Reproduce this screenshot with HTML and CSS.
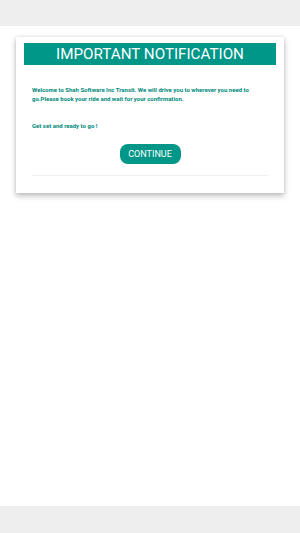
FILE: index.html
```html
<!DOCTYPE html>
<html>
<head>
<meta charset="utf-8">
<link rel="stylesheet" href="styles.css">
</head>
<body>
<div class="topbar"></div>
<main class="main">
  <div class="card">
    <div class="header">IMPORTANT NOTIFICATION</div>
    <div class="content">
      <p class="msg">Welcome to Shah Software Inc Transit. We will drive you to wherever you need to go.Please book your ride and wait for your confirmation.</p>
      <p class="msg ready">Get set and ready to go !</p>
      <div class="actions"><button class="btn">CONTINUE</button></div>
      <div class="divider"></div>
    </div>
  </div>
</main>
<div class="bottombar"></div>
</body>
</html>
```
FILE: styles.css
```css
html, body {
  margin: 0;
  padding: 0;
}
body {
  width: 300px;
  height: 533px;
  display: flex;
  flex-direction: column;
  font-family: Roboto, "Liberation Sans", sans-serif;
  background: #fff;
}
.topbar {
  height: 26px;
  background: #eeeeee;
  flex: none;
}
.bottombar {
  height: 27px;
  background: #eeeeee;
  flex: none;
}
.main {
  flex: 1;
  background: #fff;
  padding: 11px 16px 0;
}
.card {
  background: #fff;
  padding: 6px 8px 17px;
  box-shadow: 0 3px 6px rgba(0,0,0,0.25), 0 0 3px rgba(0,0,0,0.12);
}
.header {
  background: #009688;
  color: #fff;
  height: 22px;
  line-height: 22px;
  text-align: center;
  font-size: 15.2px;
}
.content {
  padding: 0 8px;
}
.msg {
  margin: 0;
  color: #00897b;
  font-size: 6px;
  font-weight: bold;
  line-height: 9px;
}
.msg:first-child {
  margin-top: 20px;
}
.ready {
  margin-top: 18px;
}
.actions {
  display: flex;
  justify-content: center;
  margin-top: 14px;
}
.btn {
  border: none;
  background: #009688;
  color: #fff;
  font-family: Roboto, "Liberation Sans", sans-serif;
  font-size: 9px;
  width: 61px;
  height: 20px;
  border-radius: 8px;
  padding: 0;
}
.divider {
  margin-top: 11px;
  height: 1px;
  background: #f0f0f0;
}
```
